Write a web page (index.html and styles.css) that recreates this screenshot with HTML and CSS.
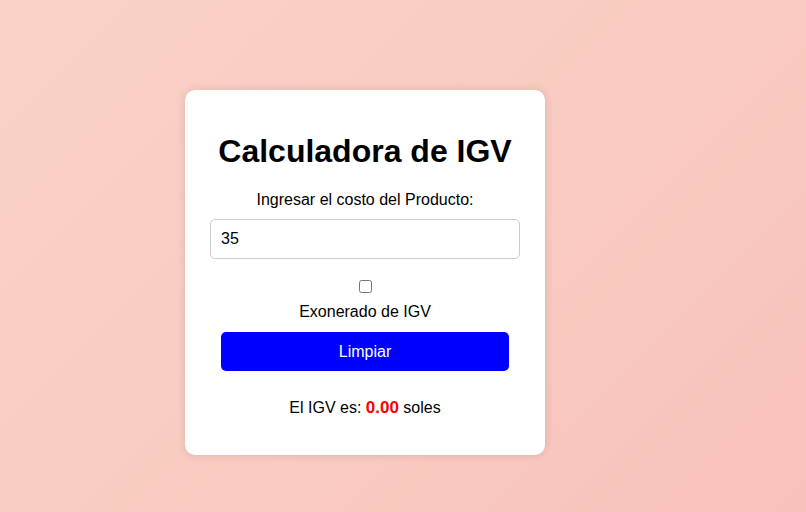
FILE: index.html
```html
<!DOCTYPE html>
<html lang="es">
<head>
<meta charset="utf-8">
<title>Calculadora de IGV</title>
<link rel="stylesheet" href="styles.css">
</head>
<body>
  <main class="page">
    <section class="card">
      <h1 class="title">Calculadora de IGV</h1>
      <label class="field-label" for="costo">Ingresar el costo del Producto:</label>
      <input class="field-input" id="costo" type="number" value="35">
      <input class="check" id="exonerado" type="checkbox">
      <label class="check-label" for="exonerado">Exonerado de IGV</label>
      <button class="btn" type="button">Limpiar</button>
      <p class="result">El IGV es: <span class="amount">0.00</span> soles</p>
    </section>
  </main>
</body>
</html>
```

FILE: styles.css
```css
html, body {
  margin: 0;
  height: 100%;
}
body {
  background: linear-gradient(135deg, #fad2c6 0%, #f9cbc0 55%, #f8c2ba 100%);
  font-family: Arial, "Liberation Sans", sans-serif;
  color: #000;
}
.page {
  display: flex;
  align-items: flex-start;
  padding: 90px 0 0 185px;
}
.card {
  box-sizing: border-box;
  width: 360px;
  height: 365px;
  background: #fff;
  border-radius: 10px;
  box-shadow: 0 0 10px rgba(0, 0, 0, 0.12);
  padding: 20px 25px;
  display: flex;
  flex-direction: column;
  align-items: center;
  text-align: center;
}
.title {
  font-size: 32px;
  font-weight: bold;
  margin: 23px 0 21px;
  line-height: 37px;
}
.field-label {
  display: block;
  font-size: 16px;
  line-height: 18px;
  margin: 0 0 10px;
}
.field-input {
  box-sizing: border-box;
  width: 310px;
  height: 40px;
  margin: 0;
  padding: 10px;
  border: 1px solid #ccc;
  border-radius: 5px;
  font-family: Arial, "Liberation Sans", sans-serif;
  font-size: 16px;
  color: #000;
  background: #fff;
  -moz-appearance: textfield;
}
.field-input::-webkit-outer-spin-button,
.field-input::-webkit-inner-spin-button {
  -webkit-appearance: none;
  margin: 0;
}
.check {
  width: 13px;
  height: 13px;
  margin: 21px 0 0;
}
.check-label {
  display: block;
  font-size: 16px;
  line-height: 18px;
  margin: 10px 0 0;
}
.btn {
  box-sizing: border-box;
  width: 288px;
  height: 39px;
  margin: 11px 0 0;
  border: none;
  border-radius: 5px;
  background: #0000ff;
  color: #fff;
  font-family: Arial, "Liberation Sans", sans-serif;
  font-size: 16px;
  cursor: pointer;
}
.result {
  font-size: 16px;
  line-height: 18px;
  margin: 28px 0 0;
}
.amount {
  color: #ff0000;
  font-weight: bold;
  font-size: 17px;
}
```
